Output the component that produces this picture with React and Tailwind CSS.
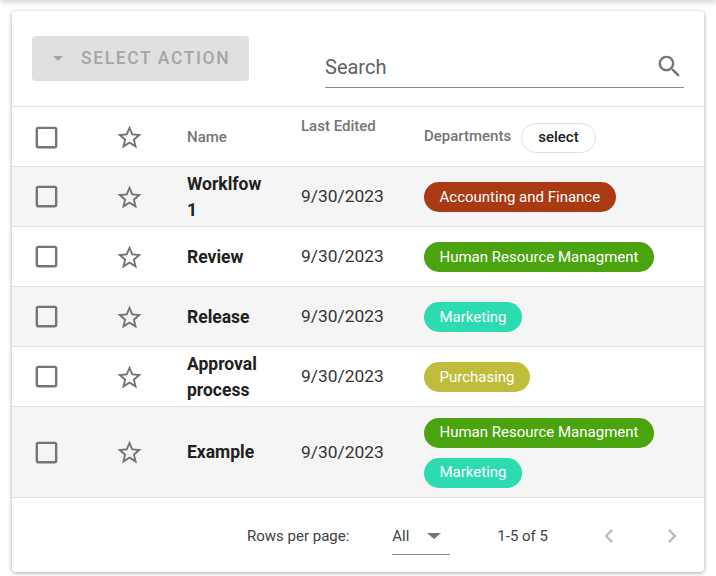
const rows = [
  { name: 'Worklfow 1', chips: [{ label: 'Accounting and Finance', color: 'bg-[#a93a13]' }] },
  { name: 'Review', chips: [{ label: 'Human Resource Managment', color: 'bg-[#4ba30f]' }] },
  { name: 'Release', chips: [{ label: 'Marketing', color: 'bg-[#2cdcb0]' }] },
  { name: 'Approval process', chips: [{ label: 'Purchasing', color: 'bg-[#c0bd3c]' }] },
  {
    name: 'Example',
    chips: [
      { label: 'Human Resource Managment', color: 'bg-[#4ba30f]' },
      { label: 'Marketing', color: 'bg-[#2cdcb0]' },
    ],
  },
]

const gridCols = 'grid grid-cols-[81px_94px_114px_123px_1fr] items-center'

function CheckboxIcon() {
  return (
    <svg viewBox="0 0 24 24" className="w-[29px] h-[29px] fill-[#757575]">
      <path d="M19 5v14H5V5h14m0-2H5c-1.1 0-2 .9-2 2v14c0 1.1.9 2 2 2h14c1.1 0 2-.9 2-2V5c0-1.1-.9-2-2-2z" />
    </svg>
  )
}

function StarIcon() {
  return (
    <svg viewBox="0 0 24 24" className="w-[29px] h-[29px] fill-[#757575]">
      <path d="M22 9.24l-7.19-.62L12 2 9.19 8.63 2 9.24l5.46 4.73L5.82 21 12 17.27 18.18 21l-1.63-7.03L22 9.24zM12 15.4l-3.76 2.27 1-4.28-3.32-2.88 4.38-.38L12 6.1l1.71 4.04 4.38.38-3.32 2.88 1 4.28L12 15.4z" />
    </svg>
  )
}

function Chip({ label, color }) {
  return (
    <span className={`inline-flex items-center h-[30px] px-[15.5px] rounded-full text-[15px] text-white ${color}`}>
      {label}
    </span>
  )
}

function Row({ row, shaded }) {
  const tall = row.chips.length > 1
  return (
    <div className={`${gridCols} border-b border-[#e0e0e0] ${tall ? 'h-[91px]' : 'h-[60px]'} ${shaded ? 'bg-[#f5f5f5]' : 'bg-white'}`}>
      <div className="pl-[20px] flex"><CheckboxIcon /></div>
      <div className="pl-[22px] pt-[1px] flex"><StarIcon /></div>
      <div className="text-[17.5px] leading-[26px] font-bold text-[#212121] max-w-[84px]">{row.name}</div>
      <div className="text-[17.4px] text-[#333333]">9/30/2023</div>
      <div className="flex flex-col items-start gap-[10px] pt-[1px]">
        {row.chips.map((c) => <Chip key={c.label} {...c} />)}
      </div>
    </div>
  )
}

export default function App() {
  return (
    <div className="relative w-[716px] h-[576px] bg-white overflow-hidden font-['Roboto',sans-serif] px-[12px] pt-[11px]">
      <div className="absolute top-[-4px] left-0 right-0 h-[4px] shadow-[0_1px_6px_rgba(0,0,0,0.3)]" />

      <div className="w-[692px] h-[561px] bg-white rounded-[4px] shadow-[0_1px_4px_rgba(0,0,0,0.35)] flex flex-col overflow-hidden">
        {/* toolbar */}
        <div className="h-[96px] flex items-start border-b border-[#e0e0e0] pl-[20px]">
          <div className="mt-[25px] w-[217px] h-[45px] rounded-[4px] bg-[#e0e0e0] flex items-center pl-[21px] gap-[18px] text-[#a6a6a6]">
            <span className="w-0 h-0 border-x-[5px] border-x-transparent border-t-[5px] border-t-[#a6a6a6]" />
            <span className="text-[17.5px] font-medium tracking-[1.6px]">SELECT ACTION</span>
          </div>
          <div className="ml-[76px] mt-[38px] w-[359px] h-[39px] flex items-center justify-between border-b border-[#8a8a8a]">
            <span className="text-[20px] text-[#616161] mb-[2px]">Search</span>
            <svg viewBox="0 0 24 24" className="w-[29px] h-[29px] fill-[#757575] mt-[-3px]">
              <path d="M15.5 14h-.79l-.28-.27C15.41 12.59 16 11.11 16 9.5 16 5.91 13.09 3 9.5 3S3 5.91 3 9.5 5.91 16 9.5 16c1.61 0 3.09-.59 4.23-1.57l.27.28v.79l5 4.99L20.49 19l-4.99-5zm-6 0C7.01 14 5 11.99 5 9.5S7.01 5 9.5 5 14 7.01 14 9.5 11.99 14 9.5 14z" />
            </svg>
          </div>
        </div>

        {/* header */}
        <div className={`${gridCols} h-[60px] border-b border-[#e0e0e0]`}>
          <div className="pl-[20px] pt-[1px] flex"><CheckboxIcon /></div>
          <div className="pl-[22px] pt-[1px] flex"><StarIcon /></div>
          <div className="pt-[1px] text-[15px] font-medium text-[#757575]">Name</div>
          <div className="self-start pt-[8px] text-[15px] font-medium text-[#757575]">Last Edited</div>
          <div className="flex items-center gap-[10px]">
            <span className="text-[15px] font-medium text-[#757575]">Departments</span>
            <span className="mt-[2px] h-[30px] px-[16px] flex items-center rounded-full border border-[#e0e0e0] text-[15px] font-medium text-[#212121]">select</span>
          </div>
        </div>

        {rows.map((row, i) => <Row key={row.name} row={row} shaded={i % 2 === 0} />)}

        {/* pagination */}
        <div className="flex-1 flex items-start pt-[27px] pl-[235px] text-[15px] text-[#424242]">
          <span>Rows per page:</span>
          <div className="ml-[43px] w-[58px] h-[30px] flex items-start justify-between border-b border-[#8a8a8a]">
            <span>All</span>
            <span className="mt-[8px] mr-[9px] w-0 h-0 border-x-[7px] border-x-transparent border-t-[6px] border-t-[#757575]" />
          </div>
          <span className="ml-[47px]">1-5 of 5</span>
          <svg viewBox="0 0 24 24" className="ml-[47px] mt-[-3px] w-[28px] h-[28px] fill-[#bdbdbd]">
            <path d="M15.41 7.41 14 6l-6 6 6 6 1.41-1.41L10.83 12z" />
          </svg>
          <svg viewBox="0 0 24 24" className="ml-[35px] mt-[-3px] w-[28px] h-[28px] fill-[#bdbdbd]">
            <path d="M10 6 8.59 7.41 13.17 12l-4.58 4.59L10 18l6-6z" />
          </svg>
        </div>
      </div>
    </div>
  )
}
